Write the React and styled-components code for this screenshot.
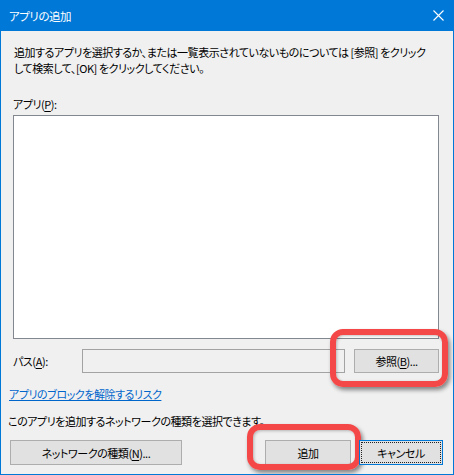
import React from "react";
import styled, { createGlobalStyle } from "styled-components";

const Global = createGlobalStyle`
  html, body { margin: 0; padding: 0; background: #f0f0f0; }
  body {
    font-family: "Noto Sans CJK JP", "Noto Sans", sans-serif;
    font-feature-settings: "palt";
  }
`;

const Window = styled.div`
  width: 454px;
  height: 475px;
  box-sizing: border-box;
  display: flex;
  flex-direction: column;
  background: #f0f0f0;
  border: 1px solid #0078d7;
  border-top: none;
  overflow: hidden;
  font-size: 11px;
  letter-spacing: -0.45px;
  color: #000;
`;

const TitleBar = styled.div`
  height: 31px;
  flex: none;
  margin: 0 -1px;
  background: #0078d7;
  color: #fff;
  display: flex;
  align-items: center;
  justify-content: space-between;
  padding: 0 10px 0 9px;
  font-size: 11.5px;
`;

const CloseIcon = styled.svg`
  width: 11px;
  height: 11px;
  display: block;
`;

const Body = styled.div`
  flex: 1;
  display: flex;
  flex-direction: column;
  padding: 13px 14px 0 7px;
`;

const Section = styled.div`
  display: flex;
  flex-direction: column;
  margin-left: 5px;
`;

const Description = styled.p`
  margin: 0;
  line-height: 16px;
  padding: 0 8px 0 1px;
`;

const Label = styled.div`
  line-height: 16px;
  margin-top: ${(p) => p.$mt || 0}px;
`;

const ListBox = styled.div`
  margin-top: 3px;
  height: 224px;
  box-sizing: border-box;
  background: #fff;
  border: 1px solid #828790;
`;

const PathRow = styled.div`
  display: flex;
  align-items: center;
  margin-top: 10px;
  height: 24px;
`;

const PathLabel = styled.span`
  width: 69px;
  flex: none;
  line-height: 16px;
`;

const PathInput = styled.div`
  width: 263px;
  height: 24px;
  box-sizing: border-box;
  border: 1px solid #a3a3a3;
  background: #f0f0f0;
`;

const Highlight = styled.div`
  position: relative;
  margin-left: ${(p) => p.$ml || 0}px;
`;

const Ring = styled.div`
  position: absolute;
  left: ${(p) => p.$l}px;
  top: ${(p) => p.$t}px;
  right: ${(p) => p.$r}px;
  bottom: ${(p) => p.$b}px;
  border: 6px solid #f44848;
  border-radius: 13px;
  box-shadow: 2px 3px 4px rgba(0, 0, 0, 0.45), inset 1px 1px 3px rgba(0, 0, 0, 0.25);
  pointer-events: none;
`;

const Button = styled.button`
  position: relative;
  width: ${(p) => p.$w}px;
  height: ${(p) => p.$h || 25}px;
  box-sizing: border-box;
  padding: 0;
  margin: 0;
  background: #e1e1e1;
  border: 1px solid ${(p) => (p.$default ? "#0078d7" : "#adadad")};
  font-family: inherit;
  font-size: 11px;
  letter-spacing: -0.45px;
  font-feature-settings: "palt";
  color: #000;
  line-height: 16px;
  ${(p) =>
    p.$default &&
    `
    &::after {
      content: "";
      position: absolute;
      inset: 1px;
      border: 1px dotted #222;
    }
  `}
`;

const Link = styled.a`
  margin-top: 13px;
  margin-left: 1px;
  color: #0066cc;
  text-decoration: underline;
  line-height: 16px;
  align-self: flex-start;
  cursor: pointer;
`;

const Note = styled.div`
  margin-top: 11px;
  line-height: 16px;
`;

const ButtonRow = styled.div`
  display: flex;
  align-items: center;
  margin-top: 11px;
  padding-left: 2px;
  margin-right: -4px;
`;

const Spacer = styled.div`
  flex: 1;
`;

const U = styled.u`
  text-decoration: underline;
  text-underline-offset: 2px;
`;

export default function App() {
  return (
    <>
      <Global />
      <Window>
        <TitleBar>
          <span>アプリの追加</span>
          <CloseIcon viewBox="0 0 11 11">
            <path d="M0.5 0.5 L10.5 10.5 M10.5 0.5 L0.5 10.5" stroke="#fff" strokeWidth="1.1" fill="none" />
          </CloseIcon>
        </TitleBar>
        <Body>
          <Section>
            <Description>
              追加するアプリを選択するか、または一覧表示されていないものについては [参照] をクリックして検索して、[OK] をクリックしてください。
            </Description>
            <Label $mt={20}>
              アプリ(<U>P</U>):
            </Label>
            <ListBox />
            <PathRow>
              <PathLabel>
                パス(<U>A</U>):
              </PathLabel>
              <PathInput />
              <Highlight $ml={9}>
                <Button $w={85} $h={24}>
                  参照(<U>B</U>)...
                </Button>
                <Ring $l={-24} $t={-20} $r={-9} $b={-14} />
              </Highlight>
            </PathRow>
          </Section>
          <Link>アプリのブロックを解除するリスク</Link>
          <Note>このアプリを追加するネットワークの種類を選択できます。</Note>
          <ButtonRow>
            <Button $w={172}>
              ネットワークの種類(<U>N</U>)...
            </Button>
            <Spacer />
            <Highlight>
              <Button $w={86}>追加</Button>
              <Ring $l={-18} $t={-16} $r={-10} $b={-5} />
            </Highlight>
            <Highlight $ml={8}>
              <Button $w={84} $default>
                キャンセル
              </Button>
            </Highlight>
          </ButtonRow>
        </Body>
      </Window>
    </>
  );
}
